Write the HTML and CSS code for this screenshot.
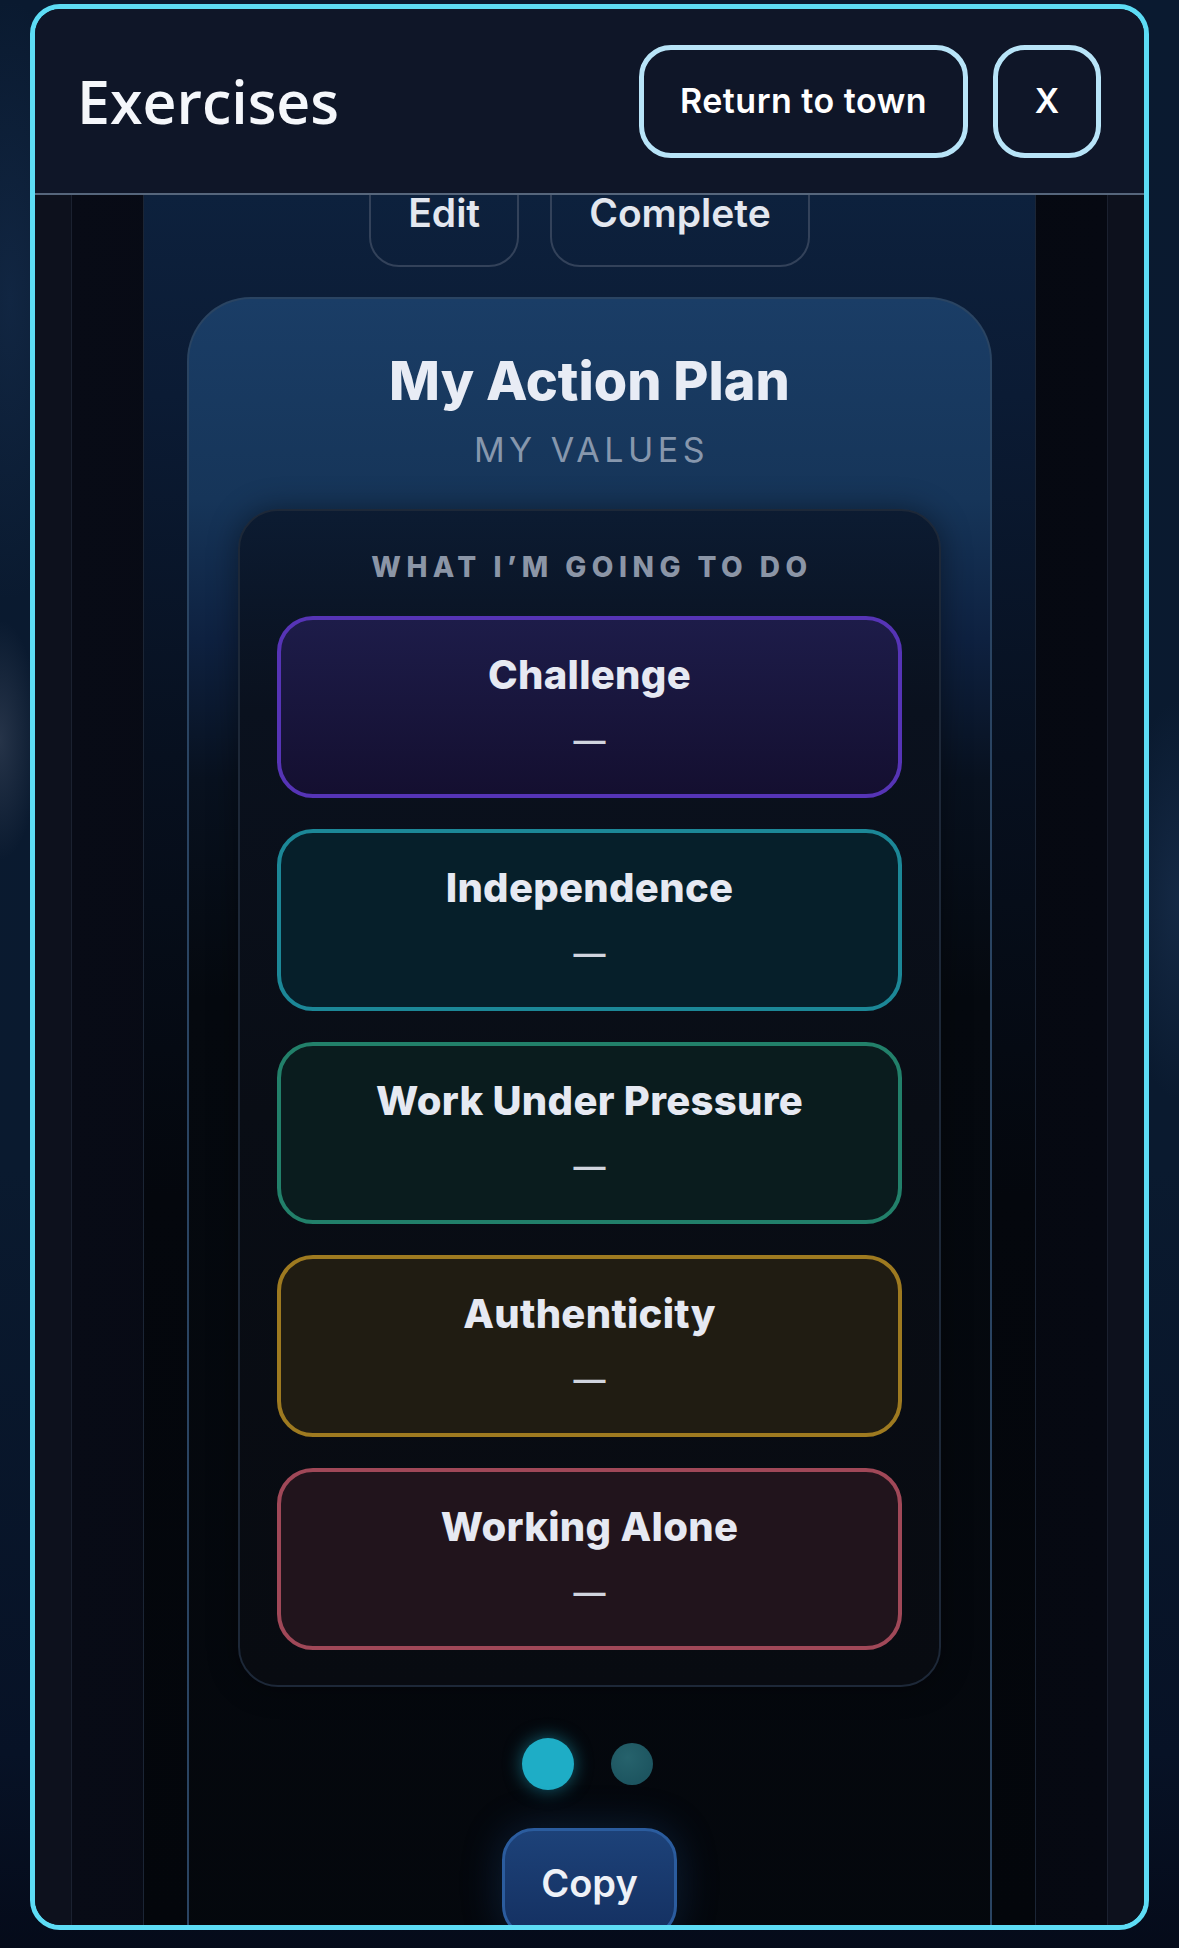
FILE: index.html
```html
<!DOCTYPE html>
<html lang="en">
<head>
<meta charset="utf-8">
<title>Exercises</title>
<link rel="stylesheet" href="styles.css">
</head>
<body>
<div class="frame">
  <header class="top">
    <h1 class="title">Exercises</h1>
    <div class="actions">
      <button class="hbtn">Return to town</button>
      <button class="hbtn hbtn-x">X</button>
    </div>
  </header>
  <main class="body">
    <div class="shell">
      <div class="panel">
        <div class="scroll">
          <div class="toolbar">
            <button class="tbtn">Edit</button>
            <button class="tbtn">Complete</button>
          </div>
          <section class="plan">
            <h2 class="plan-title">My Action Plan</h2>
            <p class="plan-sub">MY VALUES</p>
            <div class="box">
              <h3 class="box-title">WHAT I’M GOING TO DO</h3>
              <div class="cards">
                <div class="vcard v-purple"><div class="vname">Challenge</div><div class="vdash">—</div></div>
                <div class="vcard v-teal"><div class="vname">Independence</div><div class="vdash">—</div></div>
                <div class="vcard v-green"><div class="vname">Work Under Pressure</div><div class="vdash">—</div></div>
                <div class="vcard v-gold"><div class="vname">Authenticity</div><div class="vdash">—</div></div>
                <div class="vcard v-rose"><div class="vname">Working Alone</div><div class="vdash">—</div></div>
              </div>
            </div>
            <div class="dots"><span class="dot dot-on"></span><span class="dot"></span></div>
            <button class="copy">Copy</button>
          </section>
        </div>
      </div>
    </div>
  </main>
</div>
</body>
</html>
```
FILE: styles.css
```css
html, body {
  margin: 0;
  padding: 0;
  height: 1948px;
  overflow: hidden;
}

body {
  font-family: Inter, "Noto Sans", sans-serif;
  background:
    radial-gradient(ellipse 40px 120px at 0px 740px, rgba(90, 100, 120, 0.35), transparent),
    radial-gradient(ellipse 60px 200px at 1179px 900px, rgba(40, 70, 110, 0.35), transparent),
    radial-gradient(ellipse 80px 300px at 10px 300px, rgba(30, 60, 100, 0.35), transparent),
    linear-gradient(180deg, #0a1a30 0%, #0a1a2f 60%, #071226 90%, #050b1a 100%);
}

.frame {
  box-sizing: border-box;
  margin: 4px 30px 0;
  height: 1926px;
  border: 5px solid #5ddcf5;
  border-radius: 30px;
  overflow: hidden;
  display: flex;
  flex-direction: column;
  background: #0d111d;
}

.top {
  flex-shrink: 0;
  height: 186px;
  box-sizing: border-box;
  border-bottom: 2px solid #56667c;
  background: #0f1628;
  display: flex;
  align-items: center;
  justify-content: space-between;
  padding: 0 43px 0 42px;
  position: relative;
  z-index: 2;
}

.title {
  margin: 0;
  font-family: "Open Sans", sans-serif;
  font-weight: 600;
  font-size: 59px;
  line-height: 1;
  color: #f5f7fb;
}

.actions {
  display: flex;
  gap: 25px;
}

.hbtn {
  height: 113px;
  box-sizing: border-box;
  border: 5px solid #b8e4f8;
  border-radius: 32px;
  background: #0f1628;
  color: #ffffff;
  font-family: Inter, sans-serif;
  font-weight: 600;
  font-size: 34px;
  letter-spacing: 0.5px;
  line-height: 1;
  padding: 0 36px;
}

.hbtn-x {
  width: 108px;
  padding: 0;
  letter-spacing: 0;
}

.body {
  flex: 1;
  display: flex;
  padding: 0 36px;
  background: #0d111d;
  min-height: 0;
}

.shell {
  flex: 1;
  display: flex;
  padding: 0 71px;
  border-left: 1px solid #1b2130;
  border-right: 1px solid #1b2130;
  background: linear-gradient(90deg, #080b16 0%, #05080f 60%, #060912 100%);
}

.panel {
  flex: 1;
  overflow: hidden;
  border-left: 1px solid #1b2535;
  border-right: 1px solid #1b2535;
  background: linear-gradient(180deg, #0d213d 0px, #0b1b34 200px, #07101f 560px, #04070d 1000px, #03060b 100%);
}

.scroll {
  margin-top: -38px;
  display: flex;
  flex-direction: column;
  align-items: center;
}

.toolbar {
  display: flex;
  gap: 31px;
}

.tbtn {
  height: 110px;
  box-sizing: border-box;
  border: 2px solid #33425a;
  border-radius: 30px;
  background: transparent;
  color: #e3e7ef;
  font-family: Inter, sans-serif;
  font-weight: 600;
  font-size: 39px;
  line-height: 1;
  padding: 0 37px;
}

.plan {
  margin-top: 30px;
  width: 805px;
  box-sizing: border-box;
  border: 2px solid #2a4462;
  border-bottom: none;
  border-radius: 64px 64px 0 0;
  padding: 55px 0 300px;
  display: flex;
  flex-direction: column;
  align-items: center;
  background: linear-gradient(180deg, #1a3d66 0px, #163559 200px, #0e2140 340px, #08111f 480px, #05090f 700px, #04070c 100%);
}

.plan-title {
  margin: 0;
  font-weight: 800;
  font-size: 54px;
  line-height: 1;
  color: #e8ecf5;
  text-align: center;
}

.plan-sub {
  margin: 25px 0 0;
  font-weight: 400;
  font-size: 34px;
  line-height: 1;
  letter-spacing: 4.5px;
  padding-left: 4px;
  color: #8797ad;
}

.box {
  margin-top: 42px;
  width: 703px;
  box-sizing: border-box;
  border: 2px solid #1d2838;
  border-radius: 40px;
  padding: 42px 37px 35px;
  background: linear-gradient(180deg, rgba(11, 25, 46, 0.9) 0px, #0a111e 200px, #090d15 600px, #080b11 100%);
  box-shadow: 0 0 30px rgba(0, 0, 0, 0.4);
}

.box-title {
  margin: 0;
  text-align: center;
  font-weight: 800;
  font-size: 28px;
  line-height: 1;
  letter-spacing: 5.5px;
  padding-left: 5px;
  color: #8b95a6;
}

.cards {
  margin-top: 35px;
  display: flex;
  flex-direction: column;
  gap: 31px;
}

.vcard {
  height: 182px;
  box-sizing: border-box;
  border: 4px solid;
  border-radius: 36px;
  display: flex;
  flex-direction: column;
  align-items: center;
  padding-top: 35px;
}

.vname {
  font-weight: 800;
  font-size: 40px;
  letter-spacing: 0.3px;
  line-height: 1;
  color: #e6e9f2;
}

.vdash {
  margin-top: 30px;
  font-weight: 600;
  font-size: 32px;
  line-height: 1;
  color: #d0d4de;
}

.v-purple {
  border-color: #5634b6;
  background: linear-gradient(180deg, #1d1c49 0%, #140f30 100%);
}

.v-teal {
  border-color: #1c8797;
  background: #061f2a;
}

.v-green {
  border-color: #22806a;
  background: #0a1c1e;
}

.v-gold {
  border-color: #9e7a20;
  background: #201c12;
}

.v-rose {
  border-color: #a04858;
  background: #21141c;
}

.dots {
  margin-top: 51px;
  height: 52px;
  display: flex;
  align-items: center;
  justify-content: center;
  gap: 37px;
  padding-right: 4px;
}

.dot {
  width: 42px;
  height: 42px;
  border-radius: 50%;
  background: radial-gradient(circle at 40% 35%, #26626c 0%, #1d5560 70%);
}

.dot-on {
  width: 52px;
  height: 52px;
  background: #1eadc6;
  box-shadow: 0 0 18px rgba(30, 173, 198, 0.55);
}

.copy {
  margin-top: 38px;
  width: 175px;
  height: 110px;
  box-sizing: border-box;
  border: 3px solid #2b5c9e;
  border-radius: 32px;
  background: linear-gradient(180deg, #1d4279 0%, #143061 100%);
  color: #eef1f7;
  font-family: Inter, sans-serif;
  font-weight: 600;
  font-size: 38px;
  line-height: 1;
  padding: 0;
  box-shadow: 0 0 40px rgba(40, 100, 180, 0.25);
}
```
